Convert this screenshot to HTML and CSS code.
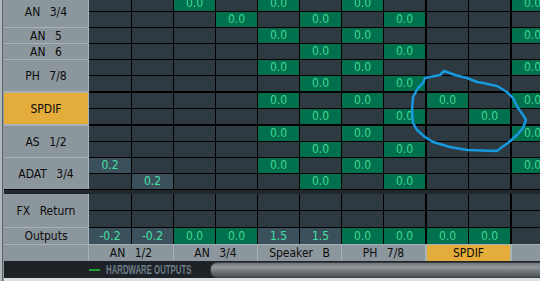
FILE: index.html
```html
<!DOCTYPE html>
<html lang="en">
<head>
    <meta charset="UTF-8">
    <title>Matrix</title>
    <link rel="stylesheet" href="styles.css">
</head>
<body>
    <div class="mixer">
        <div class="edge"></div>
        <div class="main">
            <div class="matrix top">
                <div class="group">
                    <div class="label">AN 3/4</div>
                    <div class="rows">
                        <div class="row"><div class="c"></div><div class="c"></div><div class="c g">0.0</div><div class="c"></div><div class="c g">0.0</div><div class="c"></div><div class="c g">0.0</div><div class="c"></div><div class="c"></div><div class="c"></div><div class="c g">0.0</div></div>
                        <div class="row"><div class="c"></div><div class="c"></div><div class="c"></div><div class="c g">0.0</div><div class="c"></div><div class="c g">0.0</div><div class="c"></div><div class="c g">0.0</div><div class="c"></div><div class="c"></div><div class="c"></div></div>
                    </div>
                </div>
                <div class="group">
                    <div class="label">AN 5</div>
                    <div class="rows">
                        <div class="row"><div class="c"></div><div class="c"></div><div class="c"></div><div class="c"></div><div class="c g">0.0</div><div class="c"></div><div class="c g">0.0</div><div class="c"></div><div class="c"></div><div class="c"></div><div class="c g">0.0</div></div>
                    </div>
                </div>
                <div class="group">
                    <div class="label">AN 6</div>
                    <div class="rows">
                        <div class="row"><div class="c"></div><div class="c"></div><div class="c"></div><div class="c"></div><div class="c"></div><div class="c g">0.0</div><div class="c"></div><div class="c g">0.0</div><div class="c"></div><div class="c"></div><div class="c"></div></div>
                    </div>
                </div>
                <div class="group">
                    <div class="label">PH 7/8</div>
                    <div class="rows">
                        <div class="row"><div class="c"></div><div class="c"></div><div class="c"></div><div class="c"></div><div class="c g">0.0</div><div class="c"></div><div class="c g">0.0</div><div class="c"></div><div class="c"></div><div class="c"></div><div class="c g">0.0</div></div>
                        <div class="row"><div class="c"></div><div class="c"></div><div class="c"></div><div class="c"></div><div class="c"></div><div class="c g">0.0</div><div class="c"></div><div class="c g">0.0</div><div class="c"></div><div class="c"></div><div class="c"></div></div>
                    </div>
                </div>
                <div class="group thick">
                    <div class="label selected">SPDIF</div>
                    <div class="rows">
                        <div class="row"><div class="c"></div><div class="c"></div><div class="c"></div><div class="c"></div><div class="c g">0.0</div><div class="c"></div><div class="c g">0.0</div><div class="c"></div><div class="c g">0.0</div><div class="c"></div><div class="c g">0.0</div></div>
                        <div class="row"><div class="c"></div><div class="c"></div><div class="c"></div><div class="c"></div><div class="c"></div><div class="c g">0.0</div><div class="c"></div><div class="c g">0.0</div><div class="c"></div><div class="c g">0.0</div><div class="c"></div></div>
                    </div>
                </div>
                <div class="group thick">
                    <div class="label">AS 1/2</div>
                    <div class="rows">
                        <div class="row"><div class="c"></div><div class="c"></div><div class="c"></div><div class="c"></div><div class="c g">0.0</div><div class="c"></div><div class="c g">0.0</div><div class="c"></div><div class="c"></div><div class="c"></div><div class="c g">0.0</div></div>
                        <div class="row"><div class="c"></div><div class="c"></div><div class="c"></div><div class="c"></div><div class="c"></div><div class="c g">0.0</div><div class="c"></div><div class="c g">0.0</div><div class="c"></div><div class="c"></div><div class="c"></div></div>
                    </div>
                </div>
                <div class="group">
                    <div class="label">ADAT 3/4</div>
                    <div class="rows">
                        <div class="row"><div class="c b">0.2</div><div class="c"></div><div class="c"></div><div class="c"></div><div class="c g">0.0</div><div class="c"></div><div class="c g">0.0</div><div class="c"></div><div class="c"></div><div class="c"></div><div class="c g">0.0</div></div>
                        <div class="row"><div class="c"></div><div class="c b">0.2</div><div class="c"></div><div class="c"></div><div class="c"></div><div class="c g">0.0</div><div class="c"></div><div class="c g">0.0</div><div class="c"></div><div class="c"></div><div class="c"></div></div>
                    </div>
                </div>
            </div>

            <div class="band"></div>

            <div class="matrix">
                <div class="group">
                    <div class="label">FX Return</div>
                    <div class="rows">
                        <div class="row tall"><div class="c"></div><div class="c"></div><div class="c"></div><div class="c"></div><div class="c"></div><div class="c"></div><div class="c"></div><div class="c"></div><div class="c"></div><div class="c"></div><div class="c"></div></div>
                        <div class="row tall"><div class="c"></div><div class="c"></div><div class="c"></div><div class="c"></div><div class="c"></div><div class="c"></div><div class="c"></div><div class="c"></div><div class="c"></div><div class="c"></div><div class="c"></div></div>
                    </div>
                </div>
                <div class="group">
                    <div class="label">Outputs</div>
                    <div class="rows">
                        <div class="row tall"><div class="c b">-0.2</div><div class="c b">-0.2</div><div class="c g">0.0</div><div class="c g">0.0</div><div class="c b">1.5</div><div class="c b">1.5</div><div class="c g">0.0</div><div class="c g">0.0</div><div class="c g">0.0</div><div class="c g">0.0</div><div class="c"></div></div>
                    </div>
                </div>
            </div>

            <div class="names">
                <div class="name corner"></div>
                <div class="name wide">AN 1/2</div>
                <div class="name">AN 3/4</div>
                <div class="name">Speaker B</div>
                <div class="name">PH 7/8</div>
                <div class="name selected">SPDIF</div>
                <div class="name"></div>
            </div>

            <div class="foot">
                <div class="foot-pad"></div>
                <div class="led"></div>
                <div class="foot-title">HARDWARE OUTPUTS</div>
                <div class="scroll"></div>
            </div>
            <div class="base"></div>
        </div>

        <!-- hand drawn mark around the SPDIF cells -->
        <svg class="mark" width="540" height="281" viewBox="0 0 540 281">
            <path d="M444 71 L440 75 L425 78 L423 83 L418 88 L413 97 L412 110 L413 123 L417 130 L425 137 L433 142 L450 147 L467 150 L497 151 L502 147 L508 143 L517 135 L523 128 L526 120 L523 115 L518 108 L513 98 L507 92 L497 86 L483 83 L477 82 L467 78 L455 75 L447 72 Z"/>
        </svg>
    </div>
</body>
</html>
```

FILE: styles.css
```css
body {
    margin: 0;
    width: 540px;
    height: 281px;
    overflow: hidden;
    background-color: #1c2225;
    font-family: "DejaVu Sans Condensed", "DejaVu Sans", sans-serif;
}

.mixer {
    position: relative;
    display: flex;
    height: 281px;
}

.edge {
    flex: none;
    width: 4px;
    background: linear-gradient(to right, #b3b8bb 0 2px, #5c6368 2px 3px, #8c979d 3px);
}

.main {
    flex: 1;
    display: flex;
    flex-direction: column;
    overflow: hidden;
}

.matrix.top {
    margin-top: -4px;
}

.group {
    display: flex;
}

.label {
    flex: none;
    width: 84px;
    border-right: 1px solid #a9b2b7;
    background-color: #8c979d;
    color: #0b0b0b;
    font-size: 12px;
    word-spacing: 6px;
    display: flex;
    align-items: center;
    justify-content: center;
}

.label.selected {
    background-color: #e4ac3b;
}

.group + .group .label {
    border-top: 1px solid #a9b2b7;
}

.group + .group .rows {
    border-top: 1px solid #000;
}

.group.thick .label,
.group.thick .rows {
    border-top-width: 2px;
}

.rows {
    flex: 1;
    display: flex;
    flex-direction: column;
    gap: 1px;
    background-color: #000;
}

.row {
    display: flex;
    gap: 1px;
    height: 15px;
}

.row.tall {
    height: 16px;
}

.c {
    flex: none;
    width: 41px;
    background-color: #2d3a42;
    color: #42d98f;
    text-align: center;
    font-family: "Liberation Sans Narrow", "DejaVu Sans Condensed", sans-serif;
    font-size: 12px;
    line-height: 15px;
}

.row.tall .c {
    line-height: 16px;
}

.c:first-child {
    width: 42px;
}

.c:nth-child(9),
.c:nth-child(11) {
    margin-left: 1px;
}

.c.g {
    background-color: #00704f;
}

.c.b {
    background-color: #3a515d;
    color: #42e2a3;
}

.band {
    height: 4px;
    border-top: 1px solid #000;
    background-color: #21282c;
}

.names {
    display: flex;
    gap: 1px;
    height: 16px;
    border-top: 1px solid #a9b2b7;
    background-color: #a9b2b7;
}

.name {
    flex: none;
    width: 83px;
    background-color: #8c979d;
    color: #0b0b0b;
    font-size: 12px;
    word-spacing: 6px;
    line-height: 16px;
    text-align: center;
}

.name.corner {
    width: 84px;
}

.name.wide {
    width: 84px;
}

.name.selected {
    margin-left: 1px;
    background-color: #e4ac3b;
}

.name:last-child {
    margin-left: 1px;
}

.foot {
    display: flex;
    align-items: center;
    height: 17px;
    background-color: #1c2225;
}

.foot-pad {
    flex: none;
    width: 85px;
}

.led {
    flex: none;
    width: 11px;
    height: 2px;
    background-color: #1fa032;
}

.foot-title {
    flex: none;
    width: 104px;
    margin-left: 6px;
    white-space: nowrap;
    color: #6f7e8c;
    font-family: "Liberation Sans", sans-serif;
    font-weight: bold;
    font-size: 13px;
    transform: scaleX(0.6);
    transform-origin: left center;
}

.scroll {
    flex: 1;
    height: 14px;
    border-radius: 7px 0 0 7px;
    border: 1px solid #3a3f42;
    border-right: none;
    background: linear-gradient(#6e7478, #949a9e 30%, #70767a 60%, #4b5053);
}

.base {
    height: 3px;
    background-color: #dde0e2;
}

.mark {
    position: absolute;
    top: 0;
    left: 0;
    pointer-events: none;
}

.mark path {
    fill: none;
    stroke: #1799de;
    stroke-width: 2.5;
    stroke-linejoin: round;
}
```
